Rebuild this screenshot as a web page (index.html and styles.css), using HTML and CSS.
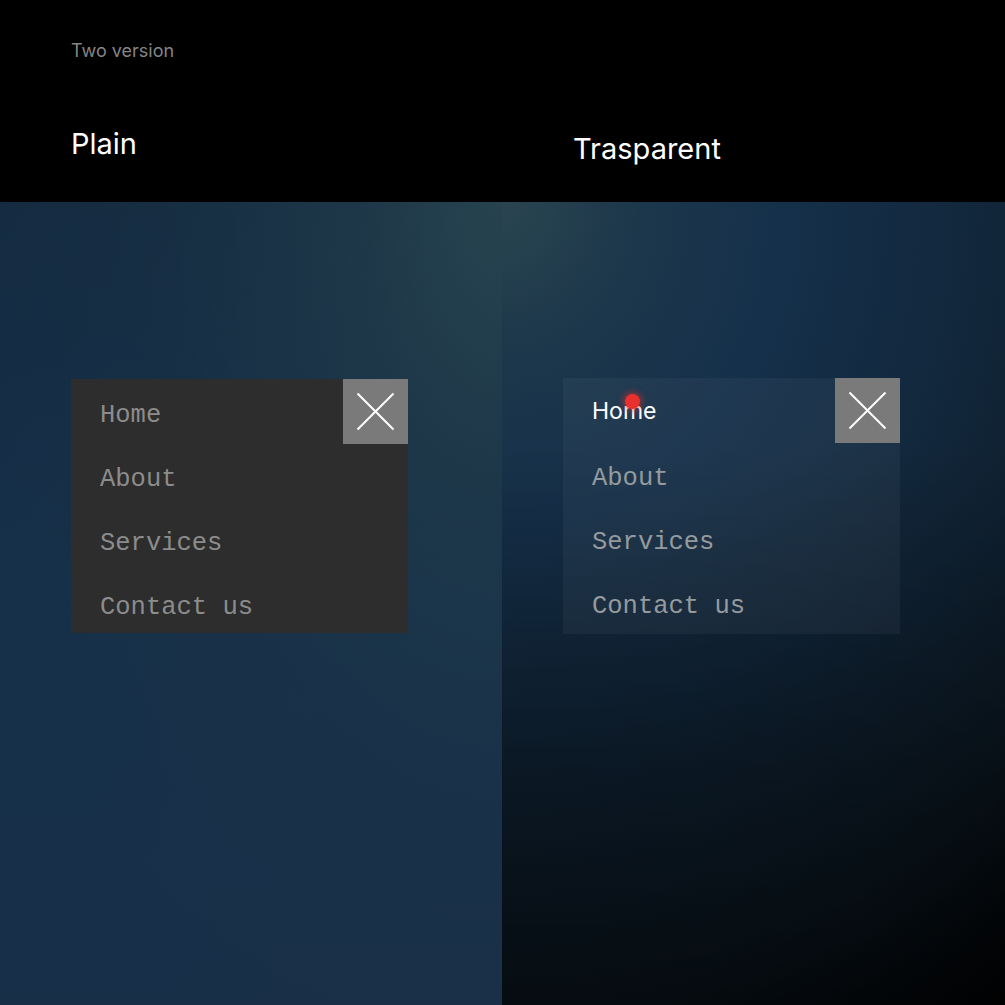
FILE: index.html
```html
<!DOCTYPE html>
<html>
<head>
<meta charset="utf-8">
<link rel="stylesheet" href="styles.css">
</head>
<body>
<header class="top">
  <div class="kicker">Two version</div>
  <div class="titles">
    <div class="title title-plain">Plain</div>
    <div class="title title-trans">Trasparent</div>
  </div>
</header>
<main class="stage">
  <section class="half half-left">
    <nav class="menu menu-plain">
      <ul class="items">
        <li class="item">Home</li>
        <li class="item">About</li>
        <li class="item">Services</li>
        <li class="item">Contact us</li>
      </ul>
      <div class="close">
        <svg width="65" height="65" viewBox="0 0 65 65"><path d="M14.5 14.5 L50.5 50.5 M50.5 14.5 L14.5 50.5" stroke="#fff" stroke-width="2" fill="none"/></svg>
      </div>
    </nav>
  </section>
  <section class="half half-right">
    <nav class="menu menu-trans">
      <ul class="items">
        <li class="item item-active"><span class="active-label">Home<span class="dot"></span></span></li>
        <li class="item">About</li>
        <li class="item">Services</li>
        <li class="item">Contact us</li>
      </ul>
      <div class="close">
        <svg width="65" height="65" viewBox="0 0 65 65"><path d="M14.5 14.5 L50.5 50.5 M50.5 14.5 L14.5 50.5" stroke="#fff" stroke-width="2" fill="none"/></svg>
      </div>
    </nav>
  </section>
</main>
</body>
</html>
```
FILE: styles.css
```css
* { box-sizing: border-box; }
html, body { margin: 0; padding: 0; background: #000; }
body { width: 1005px; height: 1005px; overflow: hidden; font-family: "Inter", "Liberation Sans", sans-serif; }

.top {
  height: 202px;
  background: #000;
  padding: 41px 0 0 71px;
}
.kicker {
  font-size: 18px;
  line-height: 20px;
  color: #858585;
}
.titles {
  display: flex;
  margin-top: 66px;
}
.title {
  color: #fff;
  font-size: 29px;
  line-height: 34px;
}
.title-plain { width: 502px; }
.title-trans { margin-top: 5px; }

.stage {
  display: flex;
  height: 803px;
}
.half {
  height: 100%;
  padding-top: 177px;
}
.half-left {
  width: 502px;
  padding-left: 71px;
  background:
    radial-gradient(ellipse 560px 1000px at 100% 0%, rgba(40,68,80,0.95) 0%, rgba(32,58,74,0.7) 30%, rgba(28,52,70,0.35) 60%, rgba(24,48,72,0) 100%),
    linear-gradient(180deg, #132a40 0%, #16304a 50%, #182f48 100%);
}
.half-right {
  flex: 1;
  padding-left: 61px;
  padding-top: 176px;
  background:
    linear-gradient(180deg, rgba(0,0,0,0) 30%, rgba(0,0,0,0.35) 70%, rgba(0,0,0,0.5) 100%),
    radial-gradient(ellipse 880px 1000px at 0% 0%, #2a4550 0%, #1c364b 16%, #15304a 32%, #12283d 52%, #0f2030 66%, #0b1822 80%, #04080c 92%, #000 100%);
}

.menu {
  position: relative;
  width: 337px;
  height: 254px;
  padding-top: 2px;
}
.menu-plain { background: #2d2d2d; padding-top: 5px; }
.menu-trans { background: rgba(255,255,255,0.045); height: 256px; padding-top: 1px; }

.items {
  list-style: none;
  margin: 0;
  padding: 0;
}
.item {
  height: 64px;
  line-height: 64px;
  padding-left: 29px;
  font-family: "Liberation Mono", "DejaVu Sans Mono", monospace;
  font-size: 25.5px;
  color: #8c8c8c;
}
.menu-trans .item { color: #959a9e; }
.menu-trans .item:nth-child(n+2) { position: relative; top: 4px; }

.active-label {
  position: relative;
  font-family: "Inter", "Liberation Sans", sans-serif;
  font-size: 23px;
  color: #fff;
}
.dot {
  position: absolute;
  left: 33px;
  top: -3px;
  width: 15px;
  height: 15px;
  border-radius: 50%;
  background: #e8302d;
  box-shadow: 0 0 6px 2px rgba(232,48,45,0.55);
}

.close {
  position: absolute;
  top: 0;
  right: 0;
  width: 65px;
  height: 65px;
  background: #7a7a7a;
}
.close svg { display: block; }
```
